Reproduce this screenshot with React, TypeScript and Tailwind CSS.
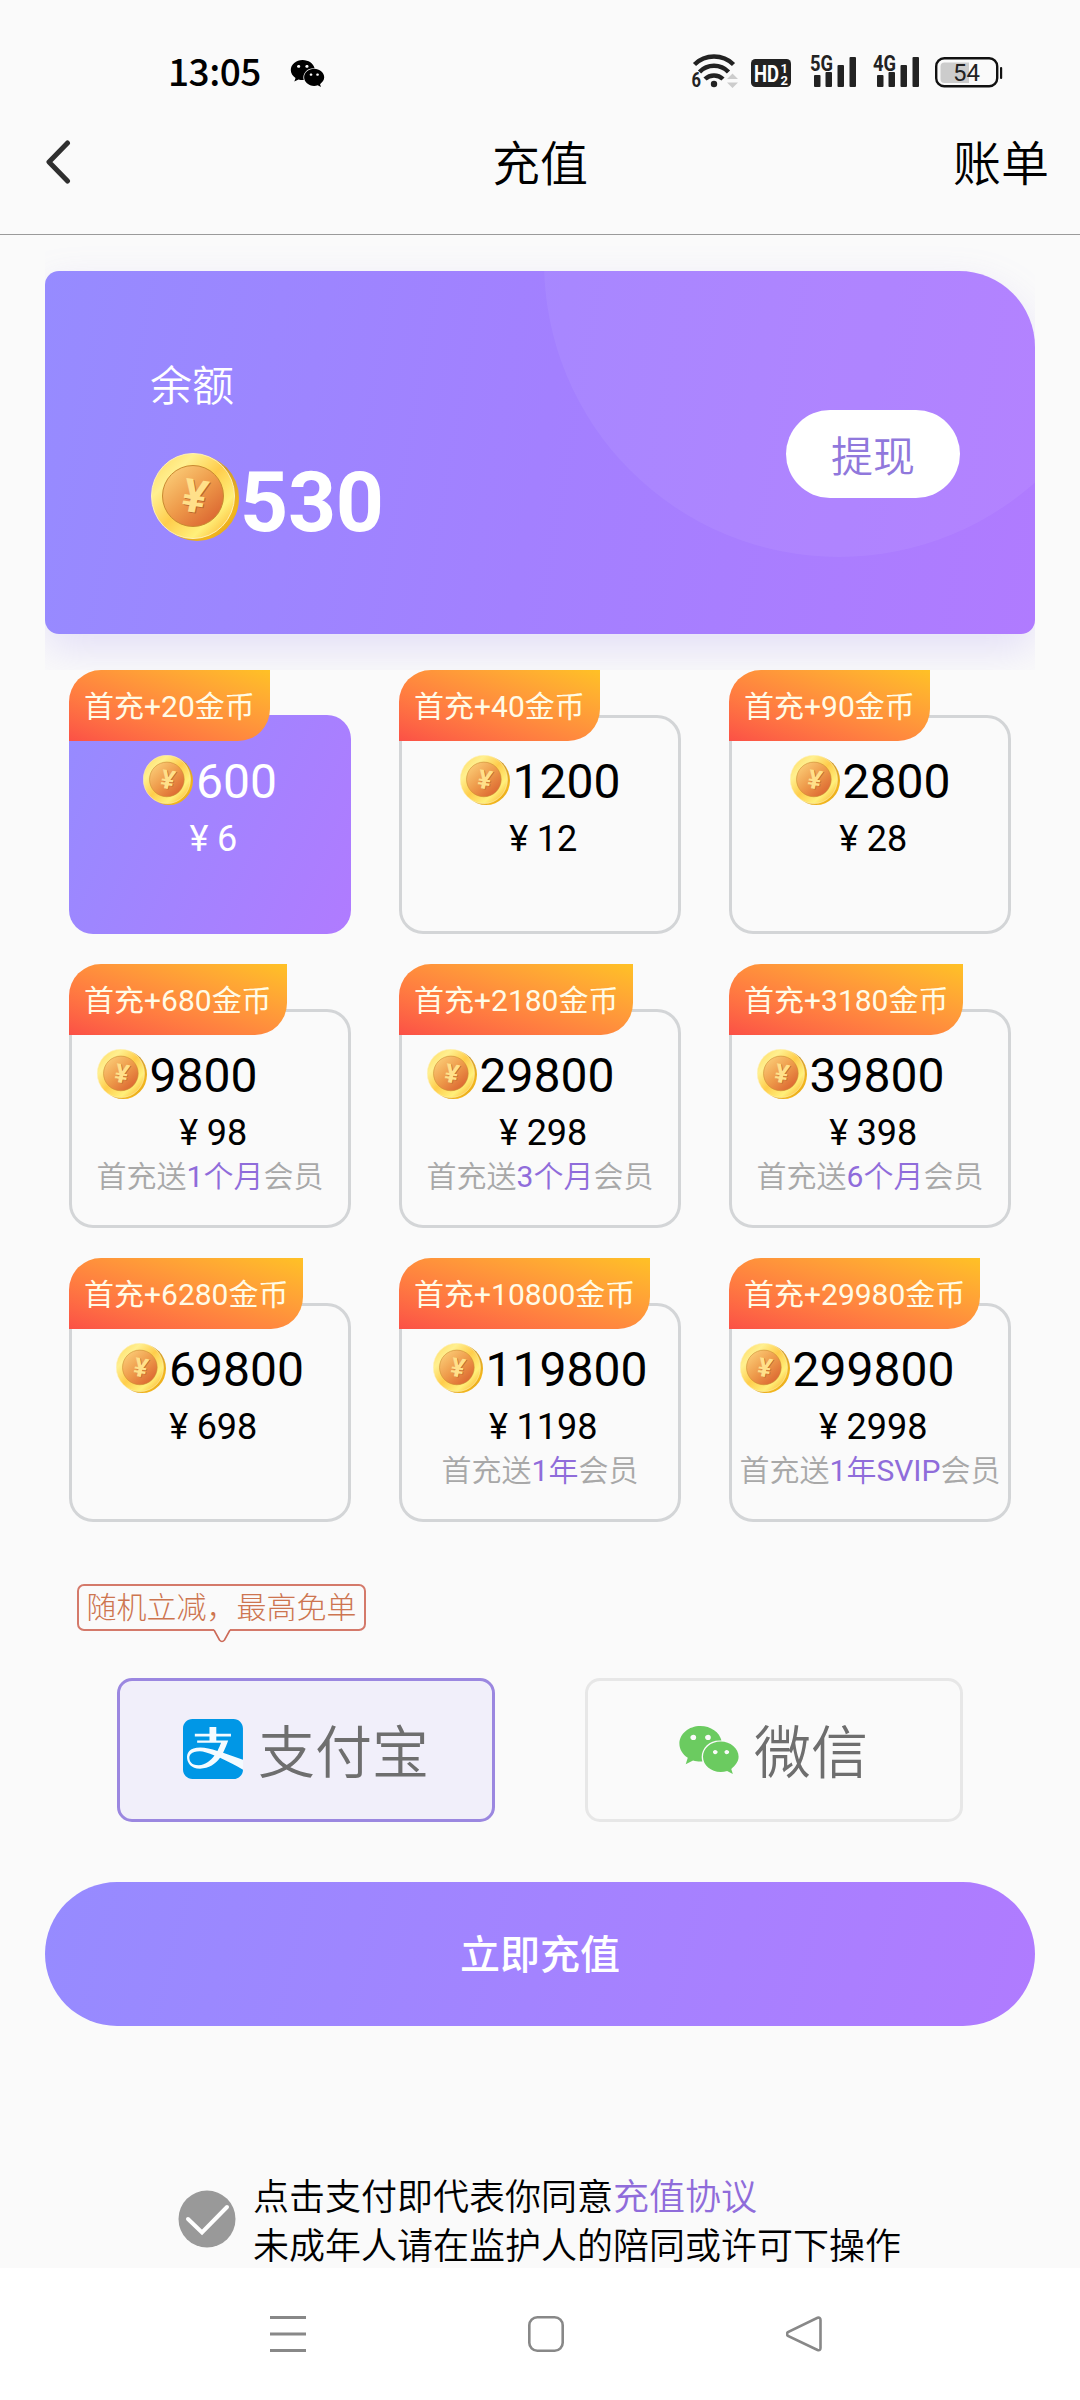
import { useId, useState } from "react";
import { FaAlipay, FaWeixin } from "react-icons/fa";

type Pack = {
  coins: number;
  price: number;
  bonus: number;
  vip?: { count: number; unit: string; level?: string };
};

const packs: Pack[] = [
  { coins: 600, price: 6, bonus: 20 },
  { coins: 1200, price: 12, bonus: 40 },
  { coins: 2800, price: 28, bonus: 90 },
  { coins: 9800, price: 98, bonus: 680, vip: { count: 1, unit: "个月" } },
  { coins: 29800, price: 298, bonus: 2180, vip: { count: 3, unit: "个月" } },
  { coins: 39800, price: 398, bonus: 3180, vip: { count: 6, unit: "个月" } },
  { coins: 69800, price: 698, bonus: 6280 },
  { coins: 119800, price: 1198, bonus: 10800, vip: { count: 1, unit: "年" } },
  { coins: 299800, price: 2998, bonus: 29980, vip: { count: 1, unit: "年", level: "SVIP" } },
];

const Coin = ({ className }: { className: string }) => {
  const id = useId();
  return (
    <svg viewBox="0 0 88 88" className={className}>
      <defs>
        <linearGradient id={`${id}edge`} x1="0" y1="0" x2="1" y2="1">
          <stop offset="0" stopColor="#fff3c4" />
          <stop offset="0.5" stopColor="#cf9a2c" />
          <stop offset="0.8" stopColor="#f3b61c" />
          <stop offset="1" stopColor="#cf9420" />
        </linearGradient>
        <linearGradient id={`${id}face`} x1="0.1" y1="0.1" x2="0.9" y2="0.9">
          <stop offset="0" stopColor="#ffe070" />
          <stop offset="0.2" stopColor="#fff090" />
          <stop offset="0.5" stopColor="#ffcd4c" />
          <stop offset="0.8" stopColor="#fff07a" />
          <stop offset="1" stopColor="#fdc040" />
        </linearGradient>
        <linearGradient id={`${id}core`} x1="0.15" y1="0.1" x2="0.85" y2="0.9">
          <stop offset="0" stopColor="#fac873" />
          <stop offset="0.5" stopColor="#ee9a4a" />
          <stop offset="1" stopColor="#dc6832" />
        </linearGradient>
      </defs>
      <ellipse cx="46" cy="45" rx="42" ry="43" fill={`url(#${id}edge)`} />
      <ellipse cx="42" cy="43" rx="41.5" ry="42.5" fill={`url(#${id}face)`} stroke="#fff0b8" strokeWidth="1" />
      <circle cx="42" cy="43" r="30.5" fill={`url(#${id}core)`} stroke="#c98a30" strokeWidth="1" />
      <g fontFamily="Roboto, sans-serif" fontWeight="700" fontSize="46" textAnchor="middle">
        <text transform="translate(41.5 60) rotate(9) skewX(-3)" fill="#b9642a">¥</text>
        <text transform="translate(40.5 59) rotate(9) skewX(-3)" fill="#ffe08a">¥</text>
      </g>
    </svg>
  );
};

const Signal = ({ label }: { label: string }) => (
  <svg viewBox="0 0 48 36" className="h-9 w-12" fill="#222">
    <text x="0" y="19" fontSize="22" fontWeight="700" textLength="23" lengthAdjust="spacingAndGlyphs" fontFamily="Roboto, sans-serif">
      {label}
    </text>
    <rect x="4" y="23" width="6.5" height="12" rx="1" />
    <rect x="15.5" y="20" width="6.5" height="15" rx="1" />
    <rect x="27.5" y="13" width="6.5" height="22" rx="1" />
    <rect x="39.5" y="5" width="6.5" height="30" rx="1" />
  </svg>
);

const StatusBar = () => (
  <div className="flex h-[91px] items-end pl-[168px] pr-[77px]">
    <span className="mb-[3px] w-[122px] font-['Noto_Sans_CJK_SC'] text-[37px] font-medium leading-[36px] tracking-[-0.5px] text-black">
      13:05
    </span>
    <FaWeixin className="h-[35px] w-[35px] text-black" />
    <div className="ml-auto flex items-end pb-[3px]">
      <svg viewBox="-4 0 52 36" className="h-9 w-[52px] overflow-visible">
        <g fill="none" stroke="#222" strokeWidth="4.5">
          <path d="M3.500 12.500a28 28 0 0 1 39 0" />
          <path d="M8.500 20a20 20 0 0 1 29 0" />
          <path d="M14 27a13 13 0 0 1 18 0" />
        </g>
        <circle cx="23" cy="32" r="3.200" fill="#222" />
        <text x="0.500" y="35" fontSize="20" fontWeight="700" textLength="9.500" lengthAdjust="spacingAndGlyphs" fontFamily="Roboto, sans-serif" fill="#222">
          6
        </text>
        <path d="M36 27l5.500-5.500 5.500 5.500zM36 30.500h11l-5.500 5.500z" fill="#ccc" />
      </svg>
      <svg viewBox="0 0 40 28" className="ml-3 mb-px h-7 w-10" fontFamily="Roboto, sans-serif" fontWeight="700" fill="#fff">
        <rect width="40" height="28" rx="4.500" fill="#222" />
        <text x="3" y="22.500" fontSize="23" textLength="25" lengthAdjust="spacingAndGlyphs">HD</text>
        <text x="29.500" y="13.500" fontSize="13">1</text>
        <text x="29.500" y="25.500" fontSize="13">2</text>
      </svg>
      <div className="ml-[19px]">
        <Signal label="5G" />
      </div>
      <div className="ml-[15px]">
        <Signal label="4G" />
      </div>
      <svg viewBox="0 0 68 32" className="ml-[14px] h-8 w-[68px]">
        <rect x="1.200" y="2.200" width="61" height="28" rx="8" fill="none" stroke="#111" strokeWidth="2.400" />
        <path d="M9.500 6.500H34v20.500H9.500a4 4 0 0 1-4-4V10.500a4 4 0 0 1 4-4z" fill="#ccc" />
        <rect x="65" y="11" width="2.200" height="12" rx="1" fill="#111" />
        <text x="31.500" y="25" fontSize="24" textAnchor="middle" fontFamily="Roboto, sans-serif" fill="#222">54</text>
      </svg>
    </div>
  </div>
);

const Header = () => (
  <div className="flex h-36 items-center justify-between border-b border-[#9a9a9a] px-[31px] pt-[5px] text-5xl font-[350] text-black">
    <button className="w-24 pl-[14px]">
      <svg viewBox="0 0 26 44" className="mb-[6px] h-11 w-[26px]">
        <path d="M22.500 3L4 22l18.500 19" fill="none" stroke="#2f2f2f" strokeWidth="5" strokeLinecap="round" strokeLinejoin="round" />
      </svg>
    </button>
    <h1 className="font-[350]">充值</h1>
    <button>账单</button>
  </div>
);

const BalanceCard = () => (
  <div className="mx-[45px] h-[435px] overflow-hidden pt-9">
    <div className="relative h-[363px] rounded-[14px] rounded-tr-[76px] bg-linear-[100deg,#968bff,#a380ff_50%,#b07bff] shadow-[0_16px_40px_rgba(150,130,240,0.22)]">
      <div className="absolute inset-0 overflow-hidden rounded-[14px] rounded-tr-[76px]">
        <div className="absolute left-[499px] top-[-304px] size-[590px] rounded-full bg-white/6" />
      </div>
      <div className="relative flex h-full items-center justify-between pl-[106px] pr-[75px]">
        <div className="text-white">
          <div className="-ml-px text-[42px] font-[350] leading-[60px]">余额</div>
          <div className="mt-[34px] flex items-center">
            <Coin className="mb-[5px] size-[88px]" />
            <span className="pl-px pt-[6px] text-[84px] font-bold leading-[92px] tracking-[-0.3px]">530</span>
          </div>
        </div>
        <button className="mt-[3px] h-[88px] w-[174px] rounded-full bg-white pt-[6px] text-[42px] font-[350] text-[#9078dc]">
          提现
        </button>
      </div>
    </div>
  </div>
);

const PackCard = ({ pack, active, onSelect }: { pack: Pack; active: boolean; onSelect: () => void }) => (
  <div className="relative pt-[45px]" onClick={onSelect}>
    <div
      className={
        active
          ? "flex h-[219px] justify-center rounded-[24px] bg-linear-[115deg,#968bff,#b07bff] pt-10 text-white"
          : "flex h-[219px] justify-center rounded-[24px] border-3 border-[#d3d5d7] pt-[37px] text-black"
      }
    >
      <div>
        <div className="flex h-[50px] items-center">
          <Coin className="size-[50px]" />
          <span className="pl-[3px] pt-1 text-5xl leading-[50px]">{pack.coins}</span>
        </div>
        <div className="mt-[11px] pr-[2px] text-center text-4xl leading-[46px]">
          <span className="inline-block w-9">¥</span>
          {pack.price}
        </div>
        {pack.vip && (
          <div className="text-center text-[30px] font-[350] leading-[42px] text-[#a8a8a8]">
            首充送
            <span className="text-[#8f6cda]">
              <span className="font-normal">{pack.vip.count}</span>
              {pack.vip.unit}
              <span className="font-normal">{pack.vip.level}</span>
            </span>
            会员
          </div>
        )}
      </div>
    </div>
    <div className="absolute left-0 top-0 h-[71px] rounded-tl-[32px] rounded-br-[32px] bg-linear-to-tr from-[#fb5046] to-[#ffc125] px-[15px] text-[30px] leading-[74px] text-[#fffbe6]">
      首充+{pack.bonus}金币
    </div>
  </div>
);

const App = () => {
  const [selected, setSelected] = useState(0);
  const [payWay, setPayWay] = useState("alipay");

  const payClass = (way: string) =>
    payWay === way
      ? "flex h-36 w-[378px] items-center justify-center gap-[15px] rounded-[15px] border-3 border-[#9b87e0] bg-[#f1effa]"
      : "flex h-36 w-[378px] items-center justify-center gap-[14px] rounded-[15px] border-3 border-[#e7e7e7]";

  return (
    <div className="flex h-[2400px] w-[1080px] flex-col overflow-hidden bg-[#fafafa] font-[Roboto,'Noto_Sans_CJK_SC',sans-serif]">
      <StatusBar />
      <Header />
      <BalanceCard />

      {/* Packages */}
      <div className="grid grid-cols-3 gap-x-12 gap-y-[30px] px-[69px]">
        {packs.map((pack, index) => (
          <PackCard key={pack.coins} pack={pack} active={index === selected} onSelect={() => setSelected(index)} />
        ))}
      </div>

      {/* Discount tip */}
      <div className="relative ml-[77px] mt-[62px] h-[47px] w-[289px] rounded-[7px] border-2 border-[#d4796a] text-center text-[30px] font-light leading-[44px] text-[#cd7550]">
        随机立减，最高免单
        <svg viewBox="0 0 18 14" className="absolute left-[134px] top-[43px] h-[14px] w-[18px]">
          <path d="M1 0h16v2l-5.500 9q-2.500 3-5 0L1 2z" fill="#fafafa" />
          <path d="M1 1l5.500 10q2.500 3 5 0L17 1" fill="none" stroke="#cc6a58" strokeWidth="1.600" />
        </svg>
      </div>

      {/* Payment methods */}
      <div className="mt-[47px] flex gap-[90px] pl-[117px] text-[57px] font-[350] leading-[60px] text-[#6e6e6e]">
        <button className={payClass("alipay")} onClick={() => setPayWay("alipay")}>
          <span className="mb-[2px] flex size-[60px] items-center justify-center rounded-xl bg-[linear-gradient(#f4fbff,#f4fbff)]">
            <FaAlipay viewBox="0 32 448 448" className="size-[60px] text-[#0097e6]" />
          </span>
          <span className="pt-[7px]">支付宝</span>
        </button>
        <button className={payClass("wechat")} onClick={() => setPayWay("wechat")}>
          <FaWeixin className="-ml-[2px] mb-px size-[62px] text-[#6bcb60]" />
          <span className="pt-[7px]">微信</span>
        </button>
      </div>

      <button className="mx-[45px] mt-[60px] h-36 rounded-full bg-linear-[105deg,#968bff,#b07bff] pt-[3px] text-[40px] font-medium text-white">
        立即充值
      </button>

      {/* Agreement */}
      <div className="mt-[145px] flex h-[97px] pl-[178px] text-4xl font-[350] leading-[49px] text-black">
        <svg viewBox="0 0 58 58" className="mt-[19px] size-[58px]">
          <circle cx="29" cy="29" r="28.500" fill="#999" />
          <path d="M10 29l14 13.500L49 17" fill="none" stroke="#fff" strokeWidth="4" strokeLinecap="round" />
        </svg>
        <div className="pl-[17px] pt-[3px]">
          <p>
            点击支付即代表你同意<span className="text-[#8f6cda]">充值协议</span>
          </p>
          <p>未成年人请在监护人的陪同或许可下操作</p>
        </div>
      </div>

      {/* System navigation */}
      <div className="flex h-[132px] items-center gap-[222px] bg-white pl-[270px]">
        <svg viewBox="0 0 36 36" className="size-9" stroke="#888" strokeWidth="3">
          <path d="M0 1.500h36M0 18h36M0 34.500h36" />
        </svg>
        <svg viewBox="0 0 36 36" className="size-9" stroke="#888" strokeWidth="2.600" fill="none">
          <rect x="1.300" y="1.300" width="33.400" height="33.400" rx="8" />
        </svg>
        <svg viewBox="0 0 36 36" className="size-9" stroke="#888" strokeWidth="2.600" fill="none">
          <path d="M31.500 1.800q3-.8 3 2.200v28q0 3-3 2L2 20q-2-2 0-4z" />
        </svg>
      </div>
    </div>
  );
};

export default App;
